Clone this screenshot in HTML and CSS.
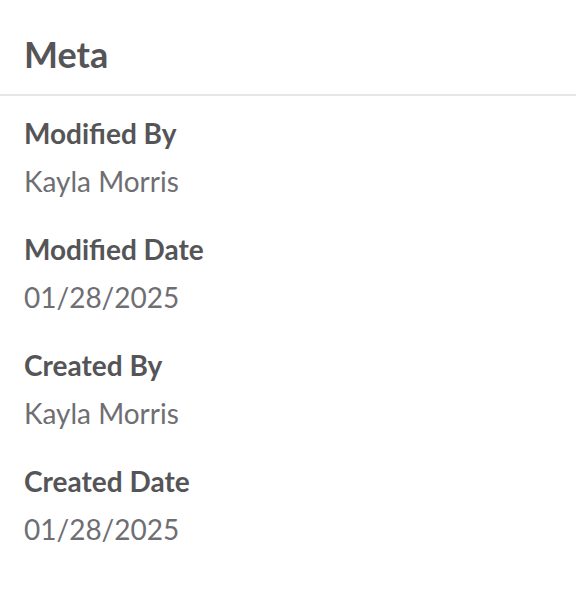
FILE: index.html
```html
<!DOCTYPE html>
<html>
<head>
<meta charset="utf-8">
<link rel="stylesheet" href="styles.css">
</head>
<body>
<section class="panel">
  <header class="panel-header"><h2 class="panel-title">Meta</h2></header>
  <div class="panel-body">
    <div class="field"><div class="label">Modified By</div><div class="value">Kayla Morris</div></div>
    <div class="field"><div class="label">Modified Date</div><div class="value">01/28/2025</div></div>
    <div class="field"><div class="label">Created By</div><div class="value">Kayla Morris</div></div>
    <div class="field"><div class="label">Created Date</div><div class="value">01/28/2025</div></div>
  </div>
</section>
</body>
</html>
```
FILE: styles.css
```css
html, body { margin: 0; padding: 0; background: #fff; }
body { font-family: Lato, "Open Sans", sans-serif; }
.panel { width: 576px; }
.panel-header {
  padding: 34px 24px 20px;
  border-bottom: 2px solid #e6e6e6;
}
.panel-title {
  margin: 0;
  font-size: 36px;
  line-height: 40px;
  font-weight: 700;
  color: #555558;
}
.panel-body {
  padding: 21px 24px 0;
  display: flex;
  flex-direction: column;
  gap: 36px;
}
.field { display: flex; flex-direction: column; gap: 16px; }
.label {
  font-size: 28px;
  line-height: 32px;
  font-weight: 700;
  color: #555558;
}
.value {
  font-size: 28px;
  line-height: 32px;
  font-weight: 400;
  color: #6e6e73;
}
```
